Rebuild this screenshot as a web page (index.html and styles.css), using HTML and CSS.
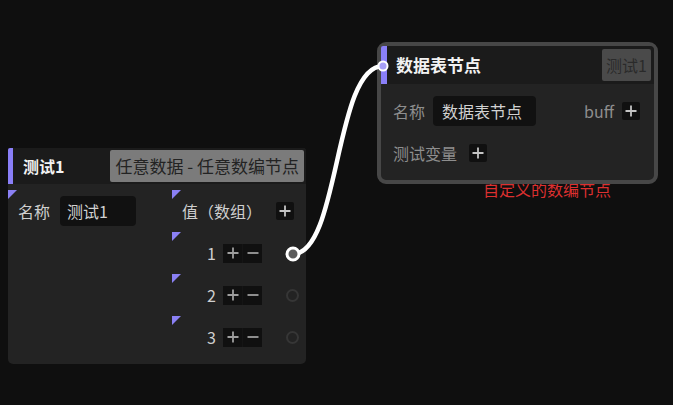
FILE: index.html
```html
<!DOCTYPE html>
<html lang="zh">
<head>
<meta charset="utf-8">
<title>节点编辑器</title>
<link rel="stylesheet" href="styles.css">
</head>
<body>
<div class="canvas">
  <div class="node node-a">
    <div class="node-head">
      <span class="accent"></span>
      <span class="title">测试1</span>
      <span class="tag tag-a">任意数据 - 任意数编节点</span>
    </div>
    <div class="node-body body-a">
      <div class="slot slot-name">
        <span class="label">名称</span>
        <span class="input input-a">测试1</span>
      </div>
      <div class="slot slot-arr">
        <span class="label">值（数组）</span>
        <span class="btn"><svg viewBox="0 0 18 18" class="ico"><path d="M3.5 9h11M9 3.5v11"/></svg></span>
      </div>
      <div class="empty"></div>
      <div class="slot slot-item">
        <span class="idx">1</span>
        <span class="btn-group">
          <span class="btn"><svg viewBox="0 0 18 18" class="ico"><path d="M3.5 9h11M9 3.5v11"/></svg></span>
          <span class="btn"><svg viewBox="0 0 18 18" class="ico"><path d="M3.5 9h11"/></svg></span>
        </span>
        <span class="port port-linked"></span>
      </div>
      <div class="empty"></div>
      <div class="slot slot-item">
        <span class="idx">2</span>
        <span class="btn-group">
          <span class="btn"><svg viewBox="0 0 18 18" class="ico"><path d="M3.5 9h11M9 3.5v11"/></svg></span>
          <span class="btn"><svg viewBox="0 0 18 18" class="ico"><path d="M3.5 9h11"/></svg></span>
        </span>
        <span class="port"></span>
      </div>
      <div class="empty"></div>
      <div class="slot slot-item">
        <span class="idx">3</span>
        <span class="btn-group">
          <span class="btn"><svg viewBox="0 0 18 18" class="ico"><path d="M3.5 9h11M9 3.5v11"/></svg></span>
          <span class="btn"><svg viewBox="0 0 18 18" class="ico"><path d="M3.5 9h11"/></svg></span>
        </span>
        <span class="port"></span>
      </div>
    </div>
  </div>

  <div class="caption">自定义的数编节点</div>

  <div class="node node-b">
    <div class="node-head head-b">
      <span class="accent accent-b"></span>
      <span class="title title-b">数据表节点</span>
      <span class="tag tag-b">测试1</span>
    </div>
    <div class="node-body body-b">
      <div class="row-b">
        <span class="label label-b">名称</span>
        <span class="input input-b">数据表节点</span>
        <span class="label label-b buff">buff</span>
        <span class="btn"><svg viewBox="0 0 18 18" class="ico"><path d="M3.5 9h11M9 3.5v11"/></svg></span>
      </div>
      <div class="row-b">
        <span class="label label-b">测试变量</span>
        <span class="btn btn-var"><svg viewBox="0 0 18 18" class="ico"><path d="M3.5 9h11M9 3.5v11"/></svg></span>
      </div>
    </div>
  </div>

  <svg class="wires" width="673" height="405" viewBox="0 0 673 405">
    <path d="M293 254 C 340 254, 334 66, 383 66" class="wire"/>
    <circle cx="293" cy="254" r="6" class="end-a"/>
    <circle cx="383" cy="66" r="4.5" class="end-b"/>
  </svg>
</div>
</body>
</html>
```

FILE: styles.css
```css
html, body {
  margin: 0;
  padding: 0;
  background: #0f0f0f;
}

.canvas {
  position: relative;
  width: 673px;
  height: 405px;
  overflow: hidden;
  background: #0f0f0f;
  font-family: "Noto Sans CJK SC", "Noto Sans", sans-serif;
  font-size: 16px;
  color: #cfcfcf;
}

.node {
  position: absolute;
  display: flex;
  flex-direction: column;
  background: #232323;
}

.node-a {
  left: 8px;
  top: 148px;
  width: 298px;
  height: 216px;
  border-radius: 3px 3px 5px 5px;
  z-index: 2;
}

.node-head {
  display: flex;
  align-items: center;
  height: 36px;
  background: #1b1b1b;
  border-radius: 3px 3px 0 0;
}

.accent {
  align-self: stretch;
  width: 5px;
  background: #8a7ff8;
  border-radius: 2px 0 0 0;
}

.title {
  flex: 1;
  margin-left: 10px;
  font-weight: 700;
  color: #f2f2f2;
  line-height: 20px;
}

.tag {
  height: 32px;
  line-height: 32px;
  border-radius: 2px;
  white-space: nowrap;
}

.tag-a {
  margin: 0 2px 0 0;
  padding: 0 5px;
  font-size: 17px;
  background: #7b7b7b;
  color: #232323;
}

.body-a {
  display: grid;
  grid-template-columns: 164px 134px;
  grid-auto-rows: 42px;
  padding-top: 6px;
}

.slot {
  position: relative;
  display: flex;
  align-items: center;
}

.slot::before {
  content: "";
  position: absolute;
  left: 0;
  top: 0;
  width: 0;
  height: 0;
  border-top: 9px solid #8a80f4;
  border-right: 9px solid transparent;
}

.slot-name {
  padding-left: 10px;
  gap: 10px;
}

.label {
  line-height: 20px;
  white-space: nowrap;
}

.input {
  display: flex;
  align-items: center;
  height: 30px;
  border-radius: 4px;
  background: #111111;
  color: #d2d2d2;
  box-sizing: border-box;
  white-space: nowrap;
}

.input-a {
  width: 76px;
  padding-left: 7px;
}

.slot-arr {
  padding-left: 10px;
  padding-right: 12px;
  justify-content: space-between;
}

.btn {
  display: flex;
  align-items: center;
  justify-content: center;
  width: 18px;
  height: 18px;
  background: #101010;
  border-radius: 2px;
}

.ico {
  width: 18px;
  height: 18px;
  fill: none;
  stroke: #c4c4c4;
  stroke-width: 1.8;
}

.slot-item {
  padding-left: 10px;
  padding-right: 7px;
}

.idx {
  width: 34px;
  text-align: right;
  line-height: 20px;
}

.btn-group {
  display: flex;
  gap: 1px;
  margin-left: 7px;
  background: #151515;
}

.btn-group .btn {
  width: 19px;
  height: 19px;
  border-radius: 0;
}

.btn-group .btn .ico {
  stroke: #9e9e9e;
}

.port {
  margin-left: auto;
  width: 9px;
  height: 9px;
  border: 2px solid #363636;
  border-radius: 50%;
}

.port-linked {
  border-color: transparent;
}

.caption {
  position: absolute;
  left: 483px;
  top: 179px;
  line-height: 20px;
  color: #dd3030;
  z-index: 1;
}

.node-b {
  left: 377px;
  top: 42px;
  width: 281px;
  height: 142px;
  box-sizing: border-box;
  border: 4px solid #474747;
  border-radius: 9px;
  z-index: 2;
}

.head-b {
  height: 38px;
  border-radius: 4px 4px 0 0;
}

.accent-b {
  width: 6px;
}

.title-b {
  margin-left: 9px;
  font-size: 17px;
}

.tag-b {
  margin-right: 3px;
  padding: 0 4px;
  background: #4a4a4a;
  color: #2a2a2a;
}

.body-b {
  display: flex;
  flex-direction: column;
  padding: 6px 14px 0 12px;
}

.row-b {
  display: flex;
  align-items: center;
  height: 42px;
}

.label-b {
  color: #8e8e8e;
}

.input-b {
  width: 103px;
  margin-left: 8px;
  padding-left: 9px;
}

.buff {
  margin-left: auto;
  margin-right: 8px;
}

.btn-var {
  margin-left: 12px;
}

.wires {
  position: absolute;
  left: 0;
  top: 0;
  z-index: 3;
  pointer-events: none;
}

.wire {
  fill: none;
  stroke: #ffffff;
  stroke-width: 4.5;
  stroke-linecap: round;
}

.end-a {
  fill: #5a5a5a;
  stroke: #ffffff;
  stroke-width: 3;
}

.end-b {
  fill: #a79ff8;
  stroke: #ffffff;
  stroke-width: 2;
}
```
